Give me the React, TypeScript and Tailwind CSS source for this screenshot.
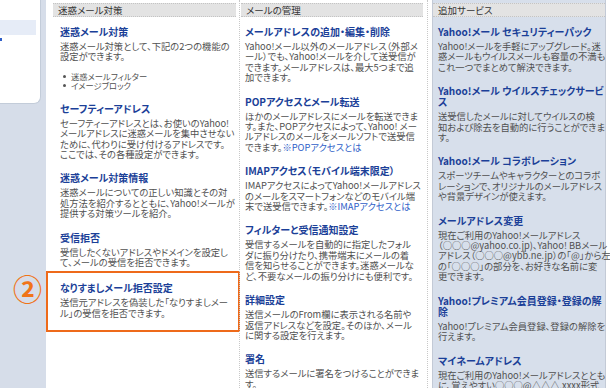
type Line = string | [string, string];

interface Item {
  title: string[];
  lines: Line[];
  bullets?: string[];
}

const col1: Item[] = [
  {
    title: ['迷惑メール対策'],
    lines: ['迷惑メール対策として、下記の2つの機能の', '設定ができます。'],
    bullets: ['迷惑メールフィルター', 'イメージブロック'],
  },
  {
    title: ['セーフティーアドレス'],
    lines: [
      'セーフティーアドレスとは、お使いのYahoo!',
      'メールアドレスに迷惑メールを集中させない',
      'ために、代わりに受け付けるアドレスです。',
      'ここでは、その各種設定ができます。',
    ],
  },
  {
    title: ['迷惑メール対策情報'],
    lines: [
      '迷惑メールについての正しい知識とその対',
      '処方法を紹介するとともに、Yahoo!メールが',
      '提供する対策ツールを紹介。',
    ],
  },
  {
    title: ['受信拒否'],
    lines: ['受信したくないアドレスやドメインを設定し', 'て、メールの受信を拒否できます。'],
  },
];

const spoof: Item = {
  title: ['なりすましメール拒否設定'],
  lines: ['送信元アドレスを偽装した「なりすましメー', 'ル」の受信を拒否できます。'],
};

const col2: Item[] = [
  {
    title: ['メールアドレスの追加・編集・削除'],
    lines: [
      'Yahoo!メール以外のメールアドレス（外部メ',
      'ール）でも、Yahoo!メールを介して送受信が',
      'できます。メールアドレスは、最大5つまで追',
      '加できます。',
    ],
  },
  {
    title: ['POPアクセスとメール転送'],
    lines: [
      'ほかのメールアドレスにメールを転送できま',
      'す。また、POPアクセスによって、Yahoo! メー',
      'ルアドレスのメールをメールソフトで送受信',
      ['できます。', '※POPアクセスとは'],
    ],
  },
  {
    title: ['IMAPアクセス（モバイル端末限定）'],
    lines: [
      'IMAPアクセスによってYahoo!メールアドレス',
      'のメールをスマートフォンなどのモバイル端',
      ['末で送受信できます。', '※IMAPアクセスとは'],
    ],
  },
  {
    title: ['フィルターと受信通知設定'],
    lines: [
      '受信するメールを自動的に指定したフォル',
      'ダに振り分けたり、携帯端末にメールの着',
      '信を知らせることができます。迷惑メールな',
      'ど、不要なメールの振り分けにも便利です。',
    ],
  },
  {
    title: ['詳細設定'],
    lines: [
      '送信メールのFrom欄に表示される名前や',
      '返信アドレスなどを設定。そのほか、メール',
      'に関する設定を行えます。',
    ],
  },
  {
    title: ['署名'],
    lines: ['送信するメールに署名をつけることができま', 'す。'],
  },
];

const col3: Item[] = [
  {
    title: ['Yahoo!メール セキュリティーパック'],
    lines: [
      'Yahoo!メールを手軽にアップグレード。迷',
      '惑メールもウイルスメールも容量の不満も',
      'これ一つでまとめて解決できます。',
    ],
  },
  {
    title: ['Yahoo!メール ウイルスチェックサービ', 'ス'],
    lines: [
      '送受信したメールに対してウイルスの検',
      '知および除去を自動的に行うことができま',
      'す。',
    ],
  },
  {
    title: ['Yahoo!メール コラボレーション'],
    lines: [
      'スポーツチームやキャラクターとのコラボ',
      'レーションで、オリジナルのメールアドレス',
      'や背景デザインが使えます。',
    ],
  },
  {
    title: ['メールアドレス変更'],
    lines: [
      '現在ご利用のYahoo!メールアドレス',
      '（○○○@yahoo.co.jp)、Yahoo! BBメール',
      'アドレス（○○○@ybb.ne.jp）の「@」から左',
      'の「○○○」の部分を、お好きな名前に変',
      '更できます。',
    ],
  },
  {
    title: ['Yahoo!プレミアム会員登録・登録の解', '除'],
    lines: ['Yahoo!プレミアム会員登録、登録の解除を', '行えます。'],
  },
  {
    title: ['マイネームアドレス'],
    lines: [
      '現在ご利用のYahoo!メールアドレスととも',
      'に、覚えやすい○○○@△△△.xxxx形式',
    ],
  },
];

function Section({ item, last }: { item: Item; last?: boolean }) {
  return (
    <div className={last ? '' : 'mb-[13px]'}>
      <div className="text-[10px] font-bold leading-[11px] text-[#1b3f98]">
        {item.title.map((t) => (
          <div key={t} className="whitespace-nowrap">
            {t}
          </div>
        ))}
      </div>
      <div className="mt-[4px] text-[9.3px] leading-[10.4px] text-[#505050]">
        {item.lines.map((l, i) =>
          typeof l === 'string' ? (
            <div key={i} className="whitespace-nowrap">
              {l}
            </div>
          ) : (
            <div key={i} className="whitespace-nowrap">
              {l[0]}
              <span className="text-[#2f5fc8]">{l[1]}</span>
            </div>
          )
        )}
      </div>
      {item.bullets && (
        <ul className="mt-[10px] text-[8.3px] leading-[9px] text-[#505050]">
          {item.bullets.map((b) => (
            <li key={b} className="flex items-center gap-[5px] pl-[3px]">
              <span className="h-[3px] w-[3px] rounded-full bg-[#555555]" />
              {b}
            </li>
          ))}
        </ul>
      )}
    </div>
  );
}

function Header({ label }: { label: string }) {
  return (
    <div className="mt-[3px] h-[14px] border-y border-dotted border-[#c4c4c4] bg-[#e3e3e3] pl-[5px] text-[9.5px] leading-[12px] text-[#333333]">
      {label}
    </div>
  );
}

export default function App() {
  return (
    <div className="relative flex h-[388px] w-[610px] overflow-hidden bg-white font-['Noto_Sans_CJK_JP',sans-serif] [font-feature-settings:'palt']">
      {/* left nav */}
      <div className="w-[46px] shrink-0 bg-[#d6dde9]">
        <div className="h-[104px] w-[41px] rounded-br-[7px] border-r border-b border-[#c3ccd9] bg-white pt-[20px]">
          <div className="h-[15px] w-[36px] bg-[#e6ecf7]" />
          <div className="mt-[3px] h-[3px] w-[2px] bg-[#2f5fc8]" />
        </div>
      </div>

      {/* col 1 */}
      <div className="w-[193px] shrink-0">
        <div className="ml-[7px] mr-[3px]">
          <Header label="迷惑メール対策" />
        </div>
        <div className="pl-[14px] pt-[9px]">
          {col1.map((it, i) => (
            <Section key={i} item={it} />
          ))}
        </div>
        <div className="mt-[-9px] mr-[-1px] border-2 border-[#ee6a1a] pb-[12px] pl-[12px] pt-[9px]">
          <Section item={spoof} last />
        </div>
      </div>

      {/* col 2 */}
      <div className="w-[189px] shrink-0 border-x border-dotted border-[#c8c8c8]">
        <div className="mr-[4px] ml-[1px]">
          <Header label="メールの管理" />
        </div>
        <div className="pl-[5px] pt-[9px]">
          {col2.map((it, i) => (
            <Section key={i} item={it} />
          ))}
        </div>
      </div>

      {/* col 3 */}
      <div className="ml-[4px] w-[174px] shrink-0 border-x border-[#c3cad6] bg-[#d7dfeb]">
        <Header label="追加サービス" />
        <div className="pl-[5px] pt-[9px]">
          {col3.map((it, i) => (
            <Section key={i} item={it} />
          ))}
        </div>
      </div>

      <span className="absolute left-[13px] top-[272px] text-[29px] font-bold leading-[32px] text-[#f07418]">
        ②
      </span>
    </div>
  );
}
